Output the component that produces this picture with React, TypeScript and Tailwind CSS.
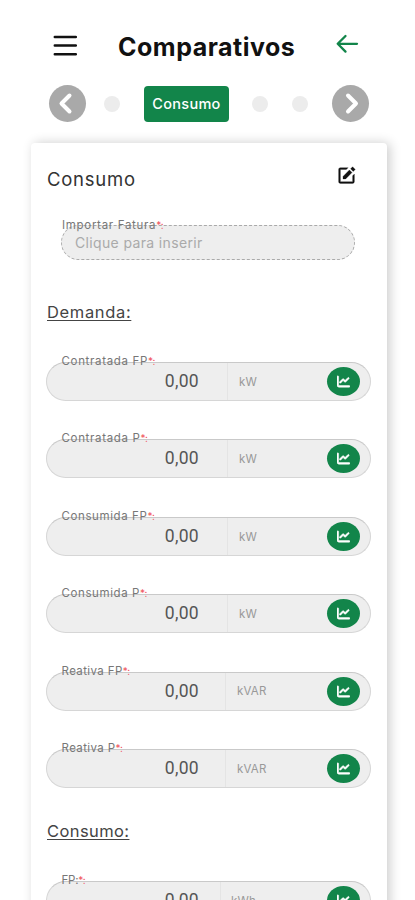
import { FaChartLine } from "react-icons/fa6";
import { BiSolidEdit } from "react-icons/bi";

interface FieldProps {
  label: string;
  labelClass: string;
  unit: string;
  unitClass: string;
}

const demandFields: FieldProps[] = [
  { label: "Contratada FP", labelClass: "tracking-[0.67px]", unit: "kW", unitClass: "w-[143px] pl-[11px]" },
  { label: "Contratada P", labelClass: "tracking-[0.67px]", unit: "kW", unitClass: "w-[143px] pl-[11px]" },
  { label: "Consumida FP", labelClass: "tracking-[0.6px]", unit: "kW", unitClass: "w-[143px] pl-[11px]" },
  { label: "Consumida P", labelClass: "tracking-[0.6px]", unit: "kW", unitClass: "w-[143px] pl-[11px]" },
  { label: "Reativa FP", labelClass: "tracking-[0.4px]", unit: "kVAR", unitClass: "w-[145px] pl-[11px]" },
  { label: "Reativa P", labelClass: "tracking-[0.4px]", unit: "kVAR", unitClass: "w-[145px] pl-[11px]" },
];

const FieldLabel = ({ label, className }: { label: string; className: string }) => (
  <label
    className={`absolute left-[14.5px] -top-[10px] whitespace-nowrap text-[11.5px] leading-4 text-[#777] ${className}`}
  >
    {label}
    <span className="text-[10px] tracking-[-0.5px] text-[#f0525c]">*:</span>
  </label>
);

const Field = ({ label, labelClass, unit, unitClass }: FieldProps) => (
  <div className="relative flex h-[39px] w-[325px] shrink-0 rounded-full border border-[#d6d6d6] border-t-[#c9c9c9] bg-[#eeeeee]">
    <FieldLabel label={label} className={labelClass} />
    <div className="w-[152px] shrink-0 text-right font-[Roboto] text-[17.5px] leading-[37px] tracking-[0.3px] text-[#555]">
      0,00
    </div>
    <div
      className={`ml-auto flex items-center border-l border-[#e4e4e4] text-[11.5px] text-[#999] ${unitClass}`}
    >
      <span className="pt-0.5 tracking-[0.2px]">{unit}</span>
      <button className="ml-auto mr-[10px] flex h-[29px] w-[33px] items-center justify-center rounded-[50%] bg-[#12854a] text-white">
        <FaChartLine className="h-[13px] w-[13px]" stroke="currentColor" strokeWidth="20" />
      </button>
    </div>
  </div>
);

const StepButton = ({ path }: { path: string }) => (
  <button className="flex h-[37px] w-[37px] items-center justify-center rounded-full bg-[#a9a9a9]">
    <svg
      viewBox="0 0 37 37"
      className="h-[37px] w-[37px]"
      fill="none"
      stroke="#fff"
      strokeWidth="4"
      strokeLinecap="round"
      strokeLinejoin="round"
    >
      <path d={path} />
    </svg>
  </button>
);

const Dot = ({ className }: { className: string }) => (
  <span className={`h-4 w-4 rounded-full bg-[#ececec] ${className}`} />
);

const App = () => {
  return (
    <div className="h-[900px] w-[415px] overflow-hidden bg-white font-[Inter,sans-serif]">
      {/* Header */}
      <header className="flex h-[85px] items-start pl-[53px] pt-[34px]">
        <svg
          viewBox="0 0 24 24"
          className="h-6 w-6"
          stroke="#111"
          strokeWidth="2.5"
          strokeLinecap="round"
        >
          <path d="M1.8 3h21M1.8 11.5h21M1.8 20.2h21" />
        </svg>
        <h1 className="ml-[41px] w-[181px] whitespace-nowrap text-[25px] font-bold leading-[27px] tracking-[0.5px] text-[#111]">
          Comparativos
        </h1>
        <svg
          viewBox="0 0 24 20"
          className="ml-[36px] h-5 w-6"
          fill="none"
          stroke="#12854a"
          strokeWidth="2.3"
          strokeLinecap="round"
          strokeLinejoin="round"
        >
          <path d="M10.5 2L2.7 9.8L10.5 17.6M2.7 9.8H22" />
        </svg>
      </header>

      {/* Stepper */}
      <nav className="flex h-[37px] items-center pl-[49px]">
        <StepButton path="M20.5 10.5L12.5 18.5L20.5 26.5" />
        <Dot className="ml-[18px]" />
        <button className="ml-6 h-9 w-[85px] rounded-[4px] bg-[#12854a] text-[14.5px] font-medium tracking-[0.3px] text-white">
          Consumo
        </button>
        <Dot className="ml-[23px]" />
        <Dot className="ml-6" />
        <div className="ml-6">
          <StepButton path="M16 10.5L24 18.5L16 26.5" />
        </div>
      </nav>

      {/* Card */}
      <main className="ml-[31px] mt-[21px] flex h-[800px] w-[356px] flex-col rounded-[4px] bg-white pl-[15px] shadow-[3px_0_12px_rgba(0,0,0,0.2)]">
        <div className="flex h-[82px] items-start pt-[22px]">
          <h2 className="w-[290px] pl-px text-[18.5px] leading-7 tracking-[0.75px] text-[#333]">
            Consumo
          </h2>
          <BiSolidEdit className="h-[21px] w-[21px] text-[#111]" stroke="currentColor" strokeWidth="0.3" />
        </div>

        <div className="relative ml-[15px] h-[35px] w-[294px] shrink-0 rounded-full border border-dashed border-[#aaa] bg-[#eeeeee] pl-[13px] text-[14px] leading-[34px] tracking-[0.35px] text-[#aaa]">
          <label className="absolute left-0 -top-[9px] whitespace-nowrap text-[11.5px] leading-4 tracking-[0.7px] text-[#777]">
            Importar Fatura<span className="text-[10px] tracking-[-0.5px] text-[#f0525c]">*:</span>
          </label>
          Clique para inserir
        </div>

        <h3 className="mt-[40px] pl-px text-[16.5px] leading-6 tracking-[0.65px] text-[#444] underline underline-offset-2">
          Demanda:
        </h3>
        <div className="mt-[38px] flex flex-col gap-[38.4px]">
          {demandFields.map((field) => (
            <Field key={field.label} {...field} />
          ))}
        </div>

        <h3 className="mb-[38px] mt-[31px] pl-px text-[16.5px] leading-6 tracking-[0.4px] text-[#444] underline underline-offset-2">
          Consumo:
        </h3>
        <Field label="FP:" labelClass="tracking-[-0.2px]" unit="kWh" unitClass="w-[150px] pl-[10px]" />
      </main>
    </div>
  );
};

export default App;
